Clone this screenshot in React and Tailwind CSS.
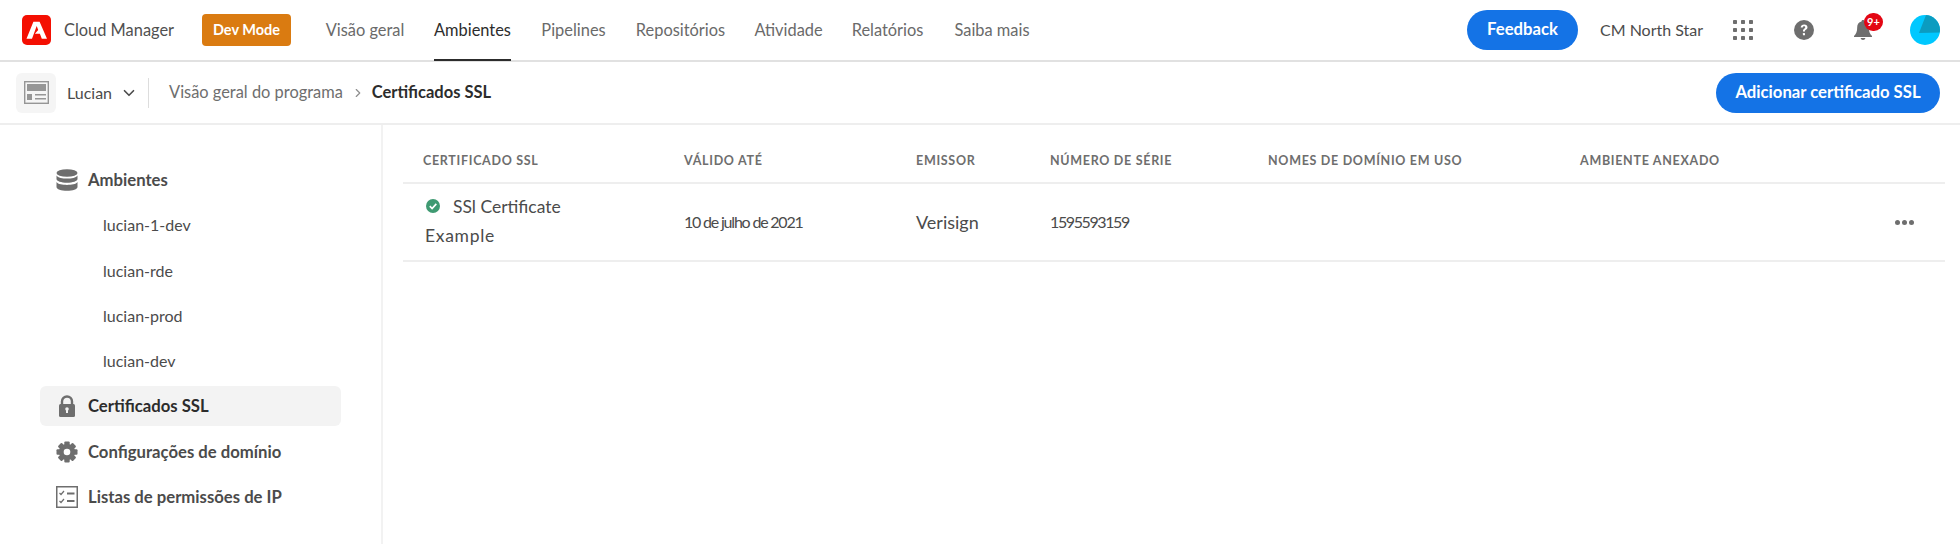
import { ChevronDown, ChevronRight } from 'lucide-react';

const NAV = [
  { label: 'Visão geral', w: 'w-[78px]' },
  { label: 'Ambientes', w: 'w-[77px]', active: true },
  { label: 'Pipelines', w: 'w-[65px]' },
  { label: 'Repositórios', w: 'w-[89px]' },
  { label: 'Atividade', w: 'w-[67px]' },
  { label: 'Relatórios', w: 'w-[71px]' },
  { label: 'Saiba mais', w: 'w-[78px]' },
];

const ENVS = ['lucian-1-dev', 'lucian-rde', 'lucian-prod', 'lucian-dev'];

const COLUMNS = [
  { label: 'Certificado SSL', w: 'w-[261px]' },
  { label: 'Válido até', w: 'w-[232px]' },
  { label: 'Emissor', w: 'w-[134px]' },
  { label: 'Número de série', w: 'w-[218px]' },
  { label: 'Nomes de domínio em uso', w: 'w-[312px]' },
  { label: 'Ambiente anexado', w: 'w-[200px]' },
];

function AdobeLogo() {
  return (
    <svg width="29" height="30" viewBox="0 0 29 30">
      <rect width="29" height="30" rx="5" fill="#f40f02" />
      <path d="M11.400 6.800h6.200L25 23.800h-5.200l-1.900-5h-5l3.300-3.800-1.500-3.900-4.700 12.700H4.500z" fill="#fff" />
    </svg>
  );
}

function GridIcon() {
  const dots = [2, 10, 18];
  return (
    <svg width="20" height="20" viewBox="0 0 20 20" fill="#6e6e6e">
      {dots.map((y) => dots.map((x) => <rect key={`${x}-${y}`} x={x - 2} y={y - 2} width="4" height="4" rx="0.8" />))}
    </svg>
  );
}

function HelpIcon() {
  return (
    <svg width="20" height="20" viewBox="0 0 20 20">
      <circle cx="10" cy="10" r="10" fill="#6e6e6e" />
      <path d="M6.700 7.600c.1-2 1.500-3.200 3.500-3.200s3.300 1.100 3.300 2.800c0 1.200-.6 1.900-1.600 2.600-.8.500-1 .9-1 1.700H9c-.1-1.300.3-2 1.200-2.700.7-.5 1.100-.9 1.100-1.500 0-.7-.5-1.100-1.200-1.100-.8 0-1.200.5-1.300 1.400z" fill="#fff" />
      <rect x="8.900" y="12.900" width="2.100" height="2.400" rx="0.6" fill="#fff" />
    </svg>
  );
}

function BellIcon() {
  return (
    <svg width="20" height="22" viewBox="0 0 20 22" fill="#6e6e6e">
      <path d="M10 1c-.9 0-1.500.6-1.500 1.400C5.600 3.100 4.200 5.400 4.200 8.300c0 3.900-.8 6.500-3.200 8.700v1h18v-1c-2.400-2.200-3.200-4.800-3.200-8.700 0-2.900-1.400-5.200-4.300-5.900C11.500 1.600 10.900 1 10 1z" />
      <path d="M7.600 19h4.800c-.2 1.200-1.200 2-2.400 2s-2.200-.8-2.400-2z" />
    </svg>
  );
}

function Avatar() {
  return (
    <svg width="30" height="30" viewBox="0 0 30 30">
      <defs>
        <clipPath id="avatar-clip">
          <circle cx="15" cy="15" r="15" />
        </clipPath>
      </defs>
      <g clipPath="url(#avatar-clip)">
        <rect width="30" height="30" fill="#00c8ff" />
        <path d="M16 0 30 0V17.500L9 18z" fill="#0b9cc0" />
      </g>
    </svg>
  );
}

function ProgramIcon() {
  return (
    <svg width="25" height="23" viewBox="0 0 25 23">
      <rect x="0.700" y="0.700" width="23.600" height="21.600" fill="none" stroke="#969696" strokeWidth="1.400" />
      <rect x="3" y="3" width="19" height="7" fill="#969696" />
      <rect x="3" y="13" width="5" height="6" fill="#969696" />
      <rect x="11" y="13" width="11" height="1.500" fill="#969696" />
      <rect x="11" y="17" width="11" height="1.500" fill="#969696" />
    </svg>
  );
}

function DatabaseIcon() {
  return (
    <svg width="22" height="22" viewBox="0 0 22 22" fill="#6e6e6e">
      <ellipse cx="11" cy="4" rx="10.500" ry="3.800" />
      <path d="M.5 6.500C2 8.800 6.500 9.600 11 9.600s9-.8 10.500-3.100V10c0 2.100-4.700 3.700-10.500 3.700S.5 12.100.5 10z" />
      <path d="M.5 13C2 15.200 6.500 15.900 11 15.900s9-.7 10.500-2.900V18c0 2.200-4.700 3.800-10.500 3.800S.5 20.200.5 18z" />
    </svg>
  );
}

function LockIcon() {
  return (
    <svg width="22" height="22" viewBox="0 0 22 22">
      <path d="M6 10V6.500a5 5 0 0 1 10 0V10" fill="none" stroke="#6e6e6e" strokeWidth="2.400" />
      <rect x="3" y="9" width="16" height="13" rx="1.500" fill="#6e6e6e" />
      <circle cx="11" cy="14" r="1.800" fill="#f3f3f3" />
      <rect x="10" y="14" width="2" height="4" fill="#f3f3f3" />
    </svg>
  );
}

function GearIcon() {
  const teeth = [0, 45, 90, 135];
  return (
    <svg width="22" height="22" viewBox="0 0 22 22">
      {teeth.map((a) => (
        <rect key={a} x="8.300" y="0.500" width="5.400" height="21" rx="1" fill="#6e6e6e" transform={`rotate(${a} 11 11)`} />
      ))}
      <circle cx="11" cy="11" r="8" fill="#6e6e6e" />
      <circle cx="11" cy="11" r="3.300" fill="#fff" />
    </svg>
  );
}

function ChecklistIcon() {
  return (
    <svg width="22" height="22" viewBox="0 0 22 22" fill="none" stroke="#6e6e6e">
      <rect x="0.750" y="0.750" width="20.500" height="20.500" strokeWidth="1.500" />
      <path d="M3.500 7l1.500 1.500 3-3.500M3.500 15l1.500 1.500 3-3.500" strokeWidth="1.200" />
      <path d="M11 7.500h7.500M11 15h7.500" strokeWidth="2" />
    </svg>
  );
}

function CheckBadge() {
  return (
    <svg width="14" height="14" viewBox="0 0 14 14" className="shrink-0">
      <circle cx="7" cy="7" r="7" fill="#3f9a72" />
      <path d="M3.800 7.200l2.300 2.300 4.200-4.600" fill="none" stroke="#fff" strokeWidth="1.700" />
    </svg>
  );
}

function SideItem({ icon, label, active }) {
  return (
    <div className={`flex h-10 items-center rounded-md pl-4 ${active ? 'bg-[#f3f3f3] text-[#2c2c2c]' : 'text-[#4b4b4b]'}`}>
      <span className="flex w-[32px] shrink-0">{icon}</span>
      <span className="pt-px text-[16.700px] font-bold whitespace-nowrap">{label}</span>
    </div>
  );
}

export default function App() {
  return (
    <div className="flex h-[544px] w-[1960px] flex-col overflow-hidden bg-white font-['Lato','Liberation_Sans',sans-serif] text-[#4b4b4b]">
      <header className="flex h-[62px] shrink-0 items-center border-b-2 border-[#e1e1e1] pl-[22px] pr-[20px]">
        <AdobeLogo />
        <span className="ml-[13px] w-[138px] text-[16.400px] whitespace-nowrap text-[#505050]">Cloud Manager</span>
        <span className="flex h-[32px] w-[89px] items-center justify-center rounded-[4px] bg-[#da7b11] text-[14.500px] font-bold text-white">Dev Mode</span>
        <nav className="ml-[35px] flex h-full gap-[30px] self-stretch">
          {NAV.map((item) => (
            <a key={item.label} className={`relative flex items-center justify-center text-[16.400px] whitespace-nowrap ${item.w} ${item.active ? 'text-[#2c2c2c]' : 'text-[#6a6a6a]'}`}>
              {item.label}
              {item.active && <span className="absolute right-0 -bottom-[1px] left-0 h-[2px] bg-[#2c2c2c]" />}
            </a>
          ))}
        </nav>
        <div className="ml-auto flex items-center">
          <button className="h-[40px] w-[111px] rounded-full bg-[#1473e6] text-[16.700px] font-bold text-white">Feedback</button>
          <span className="ml-[22px] w-[133px] text-[16px] whitespace-nowrap text-[#4b4b4b]">CM North Star</span>
          <GridIcon />
          <span className="ml-[41px] flex"><HelpIcon /></span>
          <span className="relative ml-[39px] flex">
            <BellIcon />
            <span className="absolute -top-[6px] left-[11px] flex h-[18px] w-[19px] items-center justify-center rounded-full bg-[#e30613] text-[11px] font-bold text-white">9+</span>
          </span>
          <span className="ml-[37px] flex"><Avatar /></span>
        </div>
      </header>

      <div className="flex h-[63px] shrink-0 items-center border-b-2 border-[#eeeeee] pl-[16px] pr-[20px]">
        <span className="flex h-[40px] w-[40px] items-center justify-center rounded-[6px] bg-[#f5f5f5]"><ProgramIcon /></span>
        <span className="ml-[11px] text-[16px] text-[#4b4b4b]">Lucian</span>
        <ChevronDown size={18} strokeWidth={2.200} className="ml-[8px] text-[#4b4b4b]" />
        <span className="ml-[10px] h-[30px] w-px bg-[#dddddd]" />
        <span className="ml-[20px] text-[16.400px] whitespace-nowrap text-[#6e6e6e]">Visão geral do programa</span>
        <ChevronRight size={14} className="ml-[8px] text-[#8e8e8e]" />
        <span className="ml-[7px] text-[16.500px] font-bold whitespace-nowrap text-[#2c2c2c]">Certificados SSL</span>
        <button className="ml-auto h-[40px] w-[224px] rounded-full bg-[#1473e6] text-[16.700px] font-bold whitespace-nowrap text-white">Adicionar certificado SSL</button>
      </div>

      <div className="flex min-h-0 flex-1">
        <aside className="w-[383px] shrink-0 border-r-2 border-[#f2f2f2] pt-[35px] pr-[40px] pl-[40px]">
          <div className="flex flex-col gap-[5.300px]">
            <SideItem icon={<DatabaseIcon />} label="Ambientes" />
            {ENVS.map((env) => (
              <div key={env} className="flex h-10 items-center pl-[63px] text-[16px] text-[#4b4b4b]">{env}</div>
            ))}
            <SideItem icon={<LockIcon />} label="Certificados SSL" active />
            <SideItem icon={<GearIcon />} label="Configurações de domínio" />
            <SideItem icon={<ChecklistIcon />} label="Listas de permissões de IP" />
          </div>
        </aside>

        <main className="min-w-0 flex-1 pr-[15px] pl-[20px]">
          <div className="flex h-[59px] items-center border-b-2 border-[#eeeeee] pt-[16px] pl-[20px]">
            {COLUMNS.map((col) => (
              <span key={col.label} className={`${col.w} text-[12.500px] font-bold tracking-[0.700px] whitespace-nowrap text-[#6e6e6e] uppercase`}>{col.label}</span>
            ))}
          </div>
          <div className="flex h-[78px] items-center border-b-2 border-[#eeeeee] pl-[20px] text-[#4b4b4b]">
            <div className="-mt-[3px] w-[261px] text-[17.500px] leading-[29px]">
              <div className="flex items-center">
                <span className="mr-[13px] ml-[3px]"><CheckBadge /></span>
                SSl Certificate
              </div>
              <div className="ml-[2px] tracking-[0.700px]">Example</div>
            </div>
            <span className="w-[232px] text-[16px] tracking-[-1.200px] whitespace-nowrap">10 de julho de 2021</span>
            <span className="w-[134px] text-[18px]">Verisign</span>
            <span className="w-[218px] text-[16px] tracking-[-1.400px]">1595593159</span>
            <span className="mr-[31px] ml-auto flex gap-[2px]">
              <i className="h-[5px] w-[5px] rounded-full bg-[#6e6e6e]" />
              <i className="h-[5px] w-[5px] rounded-full bg-[#6e6e6e]" />
              <i className="h-[5px] w-[5px] rounded-full bg-[#6e6e6e]" />
            </span>
          </div>
        </main>
      </div>
    </div>
  );
}
